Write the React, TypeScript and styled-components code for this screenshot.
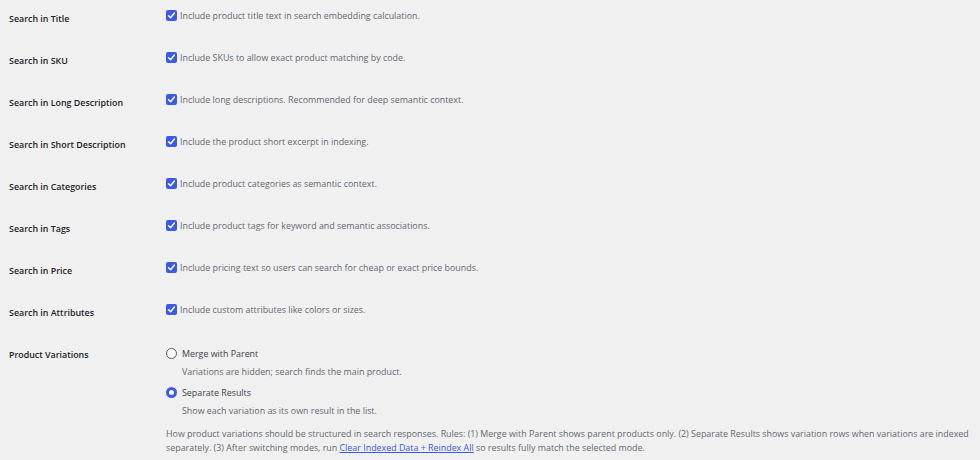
import styled, { createGlobalStyle } from "styled-components";

const GlobalStyle = createGlobalStyle`
  html, body {
    margin: 0;
    padding: 0;
    background: #f0f0f1;
  }
  body {
    font-family: "Open Sans", "Noto Sans", sans-serif;
    color: #1d2327;
  }
`;

type CheckOption = {
  label: string;
  description: string;
};

const checkOptions: CheckOption[] = [
  { label: "Search in Title", description: "Include product title text in search embedding calculation." },
  { label: "Search in SKU", description: "Include SKUs to allow exact product matching by code." },
  { label: "Search in Long Description", description: "Include long descriptions. Recommended for deep semantic context." },
  { label: "Search in Short Description", description: "Include the product short excerpt in indexing." },
  { label: "Search in Categories", description: "Include product categories as semantic context." },
  { label: "Search in Tags", description: "Include product tags for keyword and semantic associations." },
  { label: "Search in Price", description: "Include pricing text so users can search for cheap or exact price bounds." },
  { label: "Search in Attributes", description: "Include custom attributes like colors or sizes." },
];

const radioOptions = [
  { label: "Merge with Parent", description: "Variations are hidden; search finds the main product.", checked: false },
  { label: "Separate Results", description: "Show each variation as its own result in the list.", checked: true },
];

const Page = styled.div`
  padding: 0 0 0 9px;
`;

const FormTable = styled.div`
  display: flex;
  flex-direction: column;
`;

const Row = styled.div`
  display: grid;
  grid-template-columns: 157px 1fr;
  min-height: 42px;
`;

const Label = styled.div`
  font-size: 8.9px;
  font-weight: 600;
  line-height: 13px;
  padding-top: 12px;
  color: #1d2327;
`;

const Field = styled.div<{ $top?: number }>`
  padding-top: ${(p) => p.$top ?? 9}px;
  font-size: 8.9px;
  line-height: 13px;
  color: #646970;
`;

const CheckLine = styled.label`
  display: flex;
  align-items: center;
  gap: 3px;
`;

const Box = styled.span`
  width: 11px;
  height: 11px;
  border-radius: 2px;
  background: #3b5be6;
  display: inline-flex;
  align-items: center;
  justify-content: center;
  flex: none;
`;

const RadioGroup = styled.div`
  display: flex;
  flex-direction: column;
`;

const RadioItem = styled.div`
  display: flex;
  flex-direction: column;
  margin-bottom: 8px;
`;

const RadioLine = styled.label`
  display: flex;
  align-items: center;
  gap: 5px;
  color: #3c434a;
`;

const RadioDot = styled.span<{ $checked: boolean }>`
  width: 11px;
  height: 11px;
  border-radius: 50%;
  box-sizing: border-box;
  flex: none;
  background: #fff;
  border: ${(p) => (p.$checked ? "3px solid #3b5be6" : "1px solid #50575e")};
`;

const RadioHint = styled.div`
  padding-left: 16px;
  margin-top: 5px;
`;

const Help = styled.p`
  margin: 2px 0 0;
  max-width: 806px;
  line-height: 14px;
`;

const Link = styled.a`
  color: #3858e9;
  text-decoration: underline;
`;

const Check = () => (
  <Box>
    <svg width="9" height="9" viewBox="0 0 20 20">
      <path d="M3.5 10.5 L8 15 L16.5 4.5" fill="none" stroke="#fff" strokeWidth="3.2" strokeLinecap="round" strokeLinejoin="round" />
    </svg>
  </Box>
);

export default function App() {
  return (
    <Page>
      <GlobalStyle />
      <FormTable>
        {checkOptions.map((o) => (
          <Row key={o.label}>
            <Label>{o.label}</Label>
            <Field>
              <CheckLine>
                <Check />
                {o.description}
              </CheckLine>
            </Field>
          </Row>
        ))}
        <Row>
          <Label>Product Variations</Label>
          <Field $top={11}>
            <RadioGroup>
              {radioOptions.map((r) => (
                <RadioItem key={r.label}>
                  <RadioLine>
                    <RadioDot $checked={r.checked} />
                    {r.label}
                  </RadioLine>
                  <RadioHint>{r.description}</RadioHint>
                </RadioItem>
              ))}
            </RadioGroup>
            <Help>
              How product variations should be structured in search responses. Rules: (1) Merge with Parent shows parent
              products only. (2) Separate Results shows variation rows when variations are indexed separately. (3) After
              switching modes, run <Link href="#">Clear Indexed Data + Reindex All</Link> so results fully match the
              selected mode.
            </Help>
          </Field>
        </Row>
      </FormTable>
    </Page>
  );
}
